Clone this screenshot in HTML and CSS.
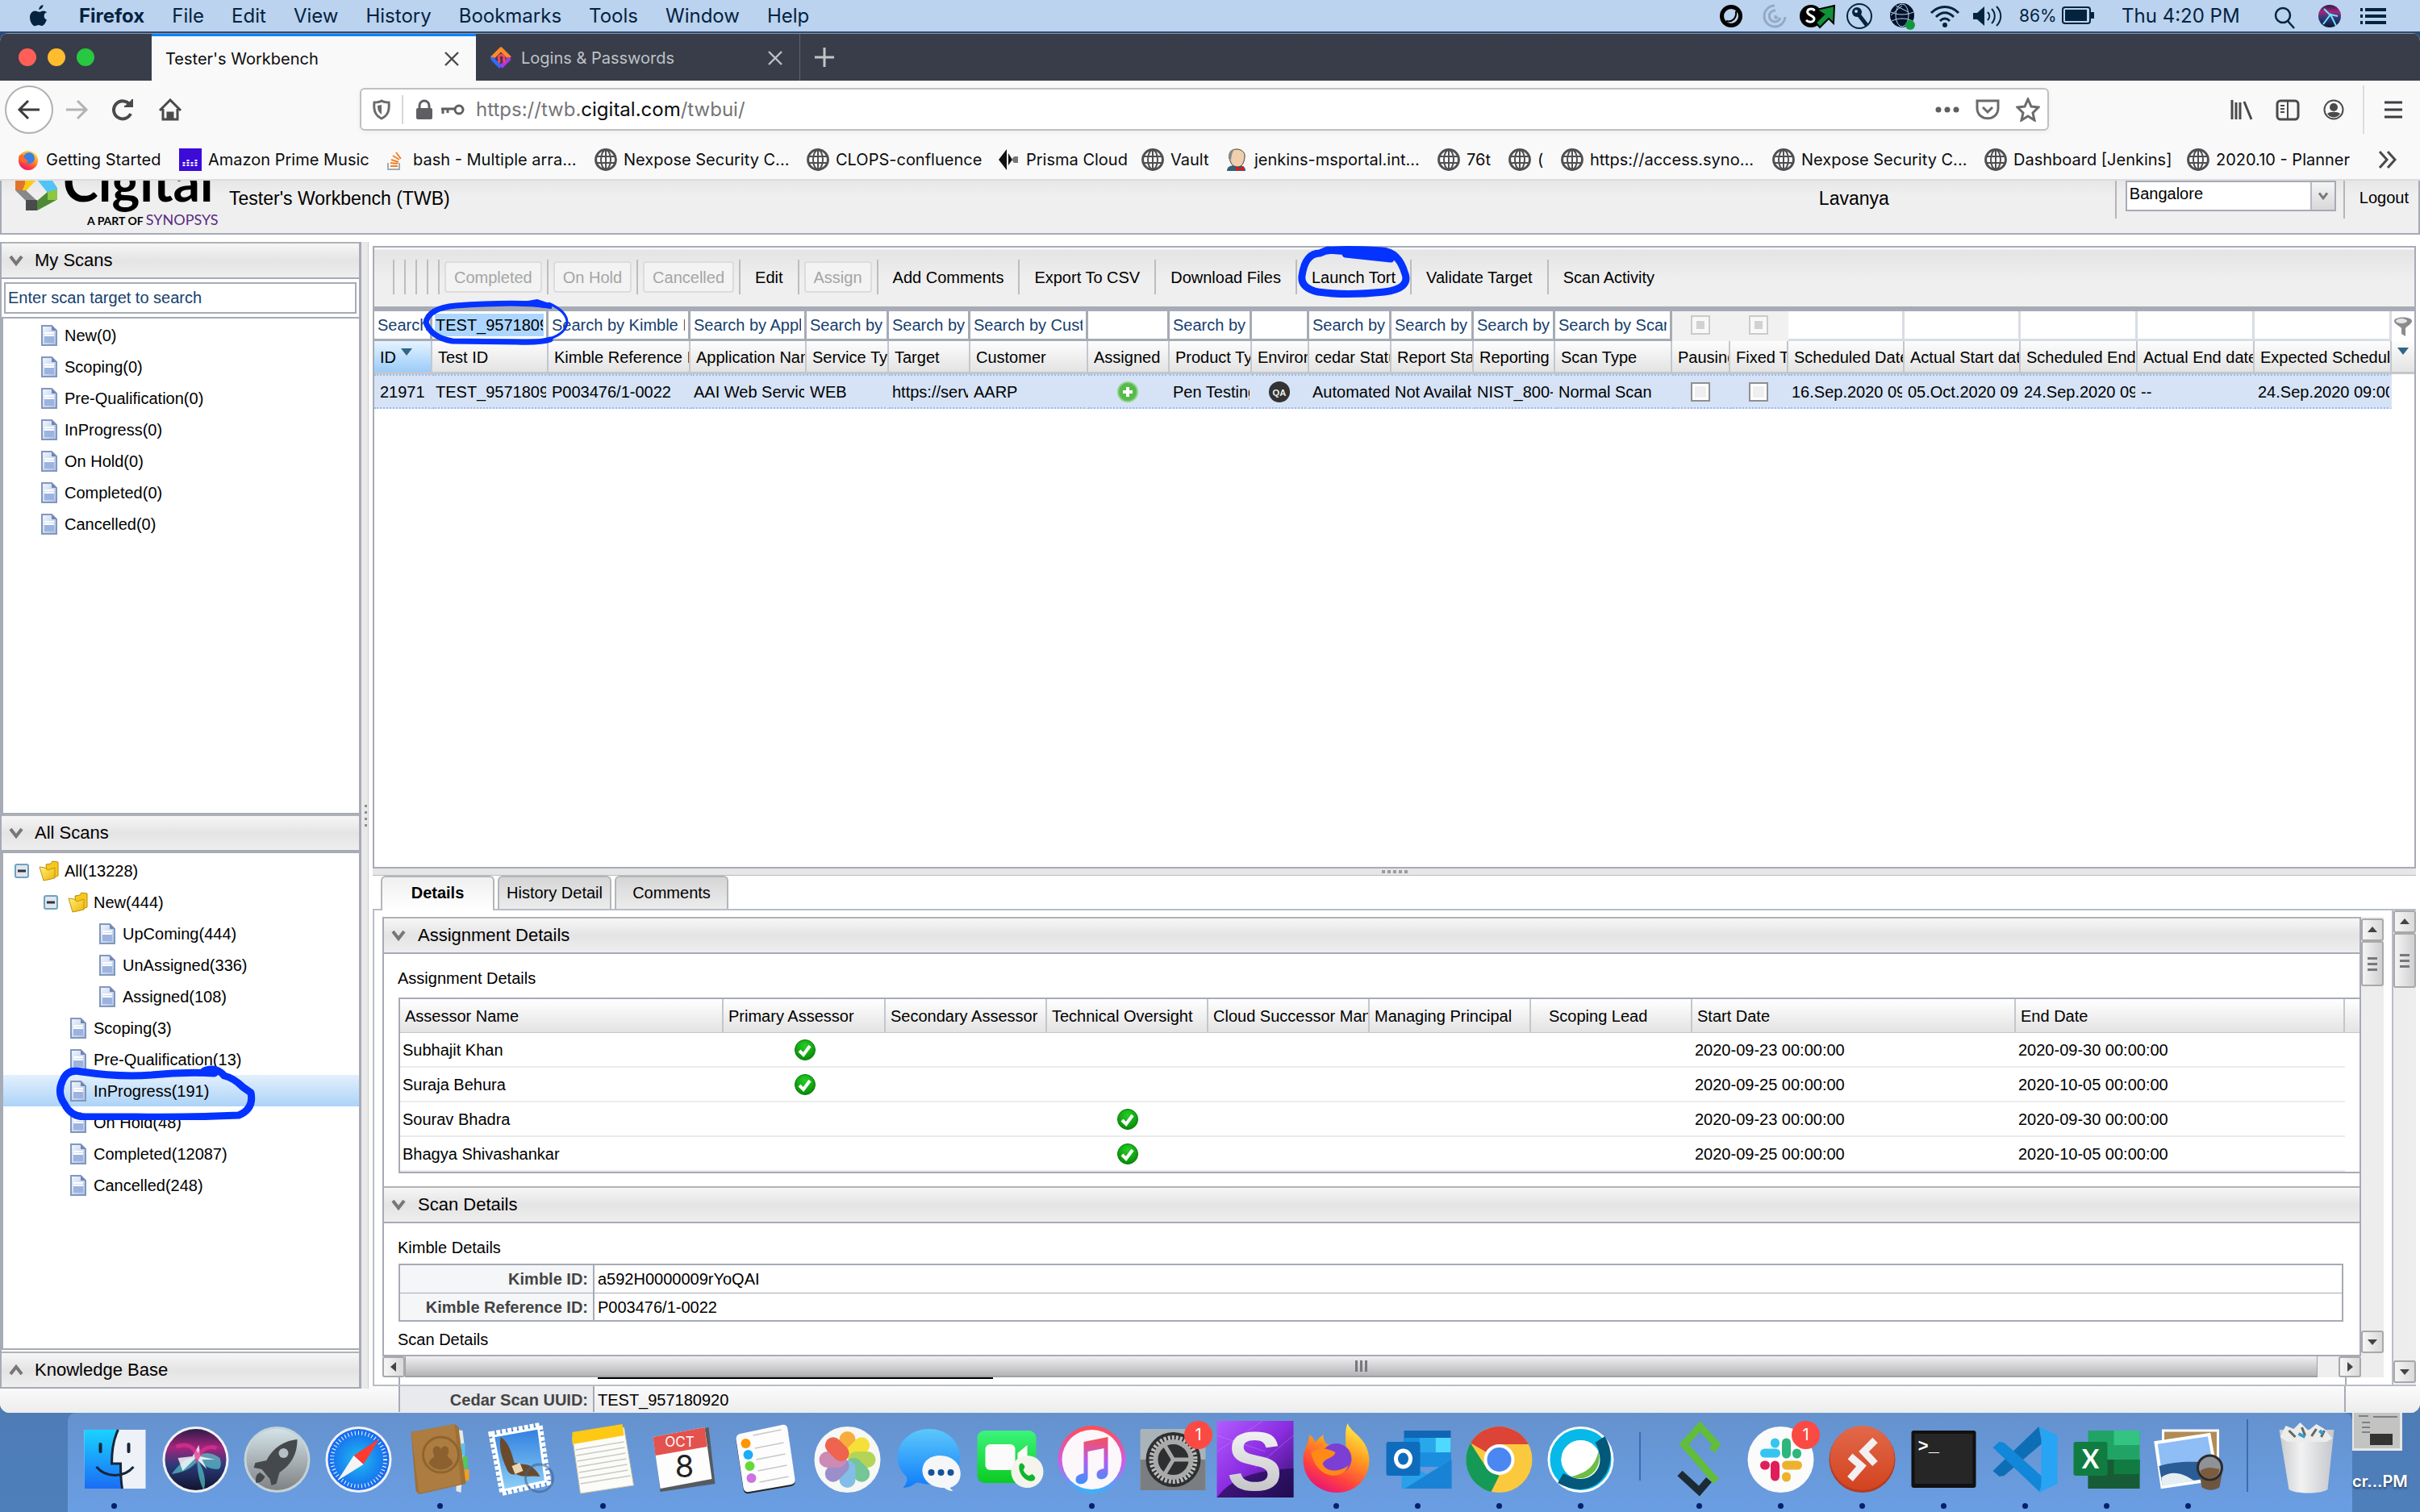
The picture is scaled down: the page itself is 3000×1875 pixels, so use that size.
FILE: index.html
```html
<!DOCTYPE html>
<html lang="en">
<head>
<meta charset="utf-8">
<title>Tester's Workbench</title>
<link rel="stylesheet" href="styles.css">
</head>
<body>
<svg class="defs" aria-hidden="true">
  <defs>
    <linearGradient id="docFill" x1="0" y1="0" x2="1" y2="1"><stop offset="0" stop-color="#f4f8fe"/><stop offset="1" stop-color="#a9bfe6"/></linearGradient>
    <linearGradient id="folderFill" x1="0" y1="0" x2="1" y2="1"><stop offset="0" stop-color="#fff07a"/><stop offset="1" stop-color="#eeb507"/></linearGradient>
    <radialGradient id="okFill" cx=".5" cy=".3" r=".7"><stop offset="0" stop-color="#26cf26"/><stop offset="1" stop-color="#078a07"/></radialGradient>
    <linearGradient id="foxFill" x1=".8" y1="0" x2=".3" y2="1"><stop offset="0" stop-color="#fff44f"/><stop offset=".4" stop-color="#ff9a1f"/><stop offset=".75" stop-color="#ff4040"/><stop offset="1" stop-color="#e6127a"/></linearGradient>
    <radialGradient id="siriFill" cx=".5" cy=".5" r=".55"><stop offset="0" stop-color="#bff6ff"/><stop offset=".25" stop-color="#3b9fc0"/><stop offset=".6" stop-color="#5a1e72"/><stop offset="1" stop-color="#170f33"/></radialGradient>
    <linearGradient id="orbFill" x1="0" y1="0" x2="0" y2="1"><stop offset="0" stop-color="#2c1c48"/><stop offset=".3" stop-color="#a3257c"/><stop offset=".6" stop-color="#2a3a78"/><stop offset="1" stop-color="#10142e"/></linearGradient>
    <linearGradient id="finderL" x1="0" y1="0" x2="0" y2="1"><stop offset="0" stop-color="#19d3ff"/><stop offset="1" stop-color="#1b6cf5"/></linearGradient>
    <linearGradient id="grayFill" x1="0" y1="0" x2="0" y2="1"><stop offset="0" stop-color="#d3e3e8"/><stop offset="1" stop-color="#7f8284"/></linearGradient>
    <radialGradient id="safariFill"><stop offset="0" stop-color="#1ebff0"/><stop offset="1" stop-color="#1667f0"/></radialGradient>
    <linearGradient id="msgFill" x1="0" y1="0" x2="0" y2="1"><stop offset="0" stop-color="#5cc8fb"/><stop offset="1" stop-color="#0f7dfb"/></linearGradient>
    <linearGradient id="ftFill" x1="0" y1="0" x2="0" y2="1"><stop offset="0" stop-color="#3cf47c"/><stop offset="1" stop-color="#0bcb22"/></linearGradient>
    <linearGradient id="ringFill" x1="0" y1="0" x2="0" y2="1"><stop offset="0" stop-color="#ff4e50"/><stop offset=".55" stop-color="#d25be8"/><stop offset="1" stop-color="#2fb8fb"/></linearGradient>
    <linearGradient id="noteFill" x1="0" y1="0" x2="0" y2="1"><stop offset="0" stop-color="#fa4f56"/><stop offset=".5" stop-color="#b55cf0"/><stop offset="1" stop-color="#3794fa"/></linearGradient>
    <linearGradient id="purpleFill" x1="0" y1="0" x2="1" y2="1"><stop offset="0" stop-color="#b25cff"/><stop offset=".5" stop-color="#8a2ce0"/><stop offset="1" stop-color="#2d0e62"/></linearGradient>
    <linearGradient id="silver" x1="0" y1="0" x2="0" y2="1"><stop offset="0" stop-color="#fff"/><stop offset="1" stop-color="#b9b9bd"/></linearGradient>
    <linearGradient id="rdpFill" x1="0" y1="0" x2="0" y2="1"><stop offset="0" stop-color="#e2694a"/><stop offset="1" stop-color="#d2431f"/></linearGradient>
    <linearGradient id="skyFill" x1="0" y1="0" x2="0" y2="1"><stop offset="0" stop-color="#2f7fe0"/><stop offset="1" stop-color="#8fd0f7"/></linearGradient>
    <linearGradient id="binFill" x1="0" y1="0" x2="1" y2="0"><stop offset="0" stop-color="#c9cbce"/><stop offset=".4" stop-color="#f2f2f2"/><stop offset="1" stop-color="#c4c7cc"/></linearGradient>
    <symbol id="globe" viewBox="0 0 28 28"><g fill="none" stroke="#4f4f52" stroke-width="2"><circle cx="14" cy="14" r="12.4" stroke-width="3"/><ellipse cx="14" cy="14" rx="6" ry="12"/><path d="M14 2v24M3 10h22M3 18h22"/></g></symbol>
    <symbol id="doc" viewBox="0 0 26 26"><path d="M4 1h12l6 6v18H4z" fill="url(#docFill)" stroke="#8397bd" stroke-width="2"/><path d="M16 1v6h6z" fill="#7186b0"/><path d="M7 10h12M7 13h12" stroke="#fff" stroke-width="2"/><path d="M7 14h12v8H7z" fill="#9db3df"/></symbol>
    <symbol id="folder" viewBox="0 0 26 26"><path d="M9 5l6-1 2-3 7 1v17l-13 5z" fill="#f6c81c" stroke="#b98906"/><path d="M1 8l7 1 3 3 9-3v13L6 25z" fill="url(#folderFill)" stroke="#c1920a"/></symbol>
    <symbol id="minus" viewBox="0 0 18 18"><rect x="1" y="1" width="16" height="16" rx="2" fill="#dfe6ef" stroke="#6fa3c0" stroke-width="2"/><path d="M4 9h10" stroke="#333" stroke-width="3"/></symbol>
    <symbol id="down" viewBox="0 0 18 14"><path d="M2 2l7 9 7-9" fill="none" stroke="#777" stroke-width="4"/></symbol>
    <symbol id="ok" viewBox="0 0 28 28"><circle cx="14" cy="14" r="12.5" fill="url(#okFill)" stroke="#067a06"/><path d="M7 15l5 5 8-11" fill="none" stroke="#fff" stroke-width="4"/></symbol>
    <symbol id="x" viewBox="0 0 18 18"><path d="M1 1l16 16M17 1L1 17" stroke="currentColor" stroke-width="2.4"/></symbol>
  </defs>
</svg>

<header class="menubar">
  <svg class="apple" viewBox="0 0 24 28"><path fill="#04233f" d="M16.5 0c.3 2.800-2.400 6-5.200 5.900C11 3.300 13.700.4 16.500 0zM20 9.500c-3.500 2.200-3 7.400.9 9.100-1 3-3.100 7-5.500 7.400-1.900.2-2.500-1.100-4.700-1.100S7.800 26.200 6 26.200C3 26 0 20.300 0 15.500 0 10.500 3.200 7.500 6.600 7.500c2 0 3.400 1.300 5 1.300 1.500 0 2.900-1.500 5.300-1.400 2 .1 3.700 1 4.700 2.400z"/></svg>
  <nav class="menus"><b>Firefox</b><span>File</span><span>Edit</span><span>View</span><span>History</span><span>Bookmarks</span><span>Tools</span><span>Window</span><span>Help</span></nav>
  <div class="status">
    <svg viewBox="0 0 53 36"><circle cx="26" cy="18" r="11.500" fill="none" stroke="#000" stroke-width="5"/><path d="M20 24c8 2 13-4 12-12" fill="none" stroke="#000" stroke-width="2"/></svg>
    <svg viewBox="0 0 53 36" fill="none" stroke="#93a9c6" stroke-width="3"><path d="M27 5a13 13 0 1 0 13 14"/><path d="M28 11a7 7 0 1 0 6 9"/><path d="M28 17v3h3"/></svg>
    <svg viewBox="0 0 53 36"><circle cx="19" cy="18" r="14" fill="#000"/><path d="M24 11c-5-4-11-1-9 3s9 4 8 8-7 4-10 1" fill="none" stroke="#fff" stroke-width="3"/><path d="M26 10l22-5-1 22-6-6-11 11-5-6 10-10z" fill="#109038" stroke="#000" stroke-width="2"/></svg>
    <svg viewBox="0 0 53 36"><circle cx="26" cy="18" r="15" fill="none" stroke="#04233f" stroke-width="2"/><circle cx="23" cy="13" r="6" fill="#04233f"/><path d="M25 16l10 13" stroke="#04233f" stroke-width="5"/><circle cx="22" cy="12" r="2" fill="#bbd3ef"/></svg>
    <svg viewBox="0 0 53 36"><circle cx="26" cy="17" r="15" fill="#04122b"/><g fill="none" stroke="#bbd3ef"><ellipse cx="26" cy="17" rx="8" ry="14"/><path d="M12 13c9 4 19 4 28 0M13 24c9-4 17-4 26 0M18 5l16 8M12 17l14-12"/></g><circle cx="36" cy="29" r="6" fill="#12983c"/></svg>
    <svg viewBox="0 0 53 36" fill="none" stroke="#04233f" stroke-width="3"><path d="M9 14c10-10 24-10 34 0M15 19c7-7 15-7 22 0M20 24c4-4 8-4 12 0"/><circle cx="26" cy="29" r="1.500" fill="#04233f"/></svg>
    <svg viewBox="0 0 53 36"><path d="M8 14h5l9-8v24l-9-8H8z" fill="#04233f"/><path d="M26 13c3 3 3 7 0 10M31 9c5 5 5 13 0 18M37 6c7 7 7 17 0 24" fill="none" stroke="#04233f" stroke-width="2"/></svg>
    <span class="pct">86%</span>
    <svg class="battery" viewBox="0 0 42 24"><rect x="1" y="1" width="34" height="20" rx="3" fill="none" stroke="#04233f" stroke-width="2"/><path d="M4 4h27v14H4z" fill="#04233f"/><path d="M38 7v8" stroke="#04233f" stroke-width="4"/></svg>
    <span class="clock">Thu 4:20 PM</span>
    <svg class="end" viewBox="0 0 56 36" fill="none" stroke="#04233f" stroke-width="2.500"><circle cx="26" cy="17" r="9"/><path d="M32 24l8 9"/></svg>
    <svg class="end" viewBox="0 0 56 36"><circle cx="28" cy="18" r="14" fill="url(#orbFill)"/><path d="M20 28l9-12 7 14M28 16l-7-7M29 16l9 2" stroke="#6fe6ff" stroke-width="2" fill="none"/></svg>
    <svg class="end" viewBox="0 0 56 36" stroke="#04233f" stroke-width="4"><path d="M16 10h26M16 18h26M16 26h26M10 10h3M10 18h3M10 26h3"/></svg>
  </div>
</header>

<div class="window">
  <div class="tabstrip">
    <div class="lights"><i class="red"></i><i class="amber"></i><i class="green"></i></div>
    <div class="btab active"><span>Tester's Workbench</span><button aria-label="Close tab"><svg viewBox="0 0 18 18"><use href="#x"/></svg></button></div>
    <div class="btab"><svg class="fav" viewBox="0 0 28 28"><path d="M3 14L14 3l11 11" fill="none" stroke="#ff8a2a" stroke-width="5" stroke-linejoin="round"/><path d="M3 13c0 2 4 6 11 12" fill="none" stroke="#2f6bff" stroke-width="5"/><path d="M25 14L14 25" fill="none" stroke="#a13be8" stroke-width="5"/><path d="M11 20c2-3 1-4 0-6 0-5 7-5 7 0-1 2-1 3 1 6" fill="none" stroke="#ff3f5e" stroke-width="3"/></svg><span>Logins &amp; Passwords</span><button aria-label="Close tab"><svg viewBox="0 0 18 18"><use href="#x"/></svg></button></div>
    <button class="newtab" aria-label="New tab"><svg viewBox="0 0 26 26"><path d="M13 1v24M1 13h24" stroke="#c3c4c8" stroke-width="3"/></svg></button>
  </div>
  <div class="navbar">
    <button class="back" aria-label="Back"><svg viewBox="0 0 30 26" fill="none" stroke="#3c3c3f" stroke-width="3"><path d="M28 13H3M14 2L3 13l11 11"/></svg></button>
    <button class="tool" aria-label="Forward"><svg viewBox="0 0 30 26" fill="none" stroke="#b3b3b5" stroke-width="3"><path d="M2 13h25M16 2l11 11-11 11"/></svg></button>
    <button class="tool" aria-label="Reload"><svg viewBox="0 0 30 28" fill="none" stroke="#4a4a4d" stroke-width="4"><path d="M24 19a11 11 0 1 1-1-11"/><path d="M16 10h10V1" fill="#4a4a4d" stroke-width="2"/></svg></button>
    <button class="tool" aria-label="Home"><svg viewBox="0 0 30 28" fill="none" stroke="#4a4a4d" stroke-width="3"><path d="M2 15L15 2l13 13M6 13v13h18V13"/><path d="M12 26v-8h6v8" fill="#4a4a4d"/></svg></button>
    <div class="urlbar">
      <svg class="u1" viewBox="0 0 26 26"><path d="M13 2c3 2 6 2 9 2 1 10-1 16-9 20C5 20 3 14 4 4c3 0 6 0 9-2z" fill="none" stroke="#6b6b6e" stroke-width="3"/><path d="M13 7v12c-4-3-5-6-5-11z" fill="#6b6b6e"/></svg>
      <i></i>
      <svg class="u2" viewBox="0 0 24 26"><path d="M6 12V8a6 6 0 0 1 12 0v4" fill="none" stroke="#5f5f62" stroke-width="3"/><rect x="2" y="11" width="20" height="14" rx="2" fill="#5f5f62"/></svg>
      <svg class="u3" viewBox="0 0 30 16"><circle cx="23" cy="8" r="5" fill="none" stroke="#5f5f62" stroke-width="3"/><path d="M18 7H1M3 7v6M9 7v5" fill="none" stroke="#5f5f62" stroke-width="3"/></svg>
      <span class="url">https://twb.<b>cigital.com</b>/twbui/</span>
      <svg class="u4" viewBox="0 0 30 8" fill="#5f5f62"><circle cx="4" cy="4" r="3.500"/><circle cx="15" cy="4" r="3.500"/><circle cx="26" cy="4" r="3.500"/></svg>
      <svg class="u4" viewBox="0 0 30 28" fill="none" stroke="#6b6b6e" stroke-width="3"><path d="M2 3h26v9c0 17-26 17-26 0z"/><path d="M9 11l6 6 6-6"/></svg>
      <svg class="u5" viewBox="0 0 30 30" fill="none" stroke="#6b6b6e" stroke-width="3"><path d="M15 2l4 9 9 1-7 7 2 9-8-5-8 5 2-9-7-7 9-1z"/></svg>
    </div>
    <div class="navend">
      <svg viewBox="0 0 30 28" stroke="#4a4a4d" stroke-width="3" fill="none"><path d="M3 2v24M8 5v21M13 5v21M18 4l9 22"/></svg>
      <svg viewBox="0 0 30 28" stroke="#4a4a4d" stroke-width="3" fill="none"><rect x="2" y="3" width="26" height="23" rx="4"/><path d="M15 3v23M6 9h5M6 13h5M6 17h5" stroke-width="2"/></svg>
      <svg viewBox="0 0 30 28"><circle cx="15" cy="14" r="11.500" fill="none" stroke="#4a4a4d" stroke-width="2"/><circle cx="15" cy="11" r="5" fill="#4a4a4d"/><path d="M7 19c3-3 13-3 16 0-4 6-12 6-16 0z" fill="#4a4a4d"/></svg>
      <i></i>
      <svg viewBox="0 0 30 28" stroke="#3c3c3f" stroke-width="3"><path d="M4 5h22M4 14h22M4 23h22"/></svg>
    </div>
  </div>
  <nav class="bookmarks">
    <a href="#"><svg viewBox="0 0 28 28"><circle cx="14" cy="15" r="12" fill="url(#foxFill)"/><circle cx="15" cy="12" r="7" fill="#3c7fe8"/><path d="M2 12C3 6 6 9 8 8c-1 4 4 5 6 8-5 4-10 0-12-4z" fill="#ff6a2a"/></svg>Getting Started</a>
    <a href="#"><svg viewBox="0 0 28 28"><path d="M0 0h28v28H0z" fill="#3d0bd8"/><path d="M6 22v-6M11 22v-9M16 22v-5M21 22v-9" stroke="#fff" stroke-width="3" stroke-dasharray="2 1"/></svg>Amazon Prime Music</a>
    <a href="#"><svg viewBox="0 0 28 28" fill="none"><path d="M5 18v8h14v-8" stroke="#a3abb3" stroke-width="2"/><path d="M8 22h9M8 18l9 1M9 14l9 3M11 9l8 5M15 5l6 8" stroke="#f48024" stroke-width="2"/></svg>bash - Multiple arra...</a>
    <a href="#"><svg><use href="#globe"/></svg>Nexpose Security C...</a>
    <a href="#"><svg><use href="#globe"/></svg>CLOPS-confluence</a>
    <a href="#"><svg viewBox="0 0 28 28"><path d="M12 1L2 14l10 13zM14 6l5 8-5 7z" fill="#111"/><path d="M18 14l3-4h5v8h-5z" fill="#777"/></svg>Prisma Cloud</a>
    <a href="#"><svg><use href="#globe"/></svg>Vault</a>
    <a href="#"><svg viewBox="0 0 28 28"><path d="M2 28c0-6 5-7 12-7s11 1 11 7z" fill="#335f78"/><path d="M5 11C5 3 9 1 14 1s11 3 10 10-3 12-9 12S6 18 5 11z" fill="#eecfae" stroke="#4a3a2c"/><path d="M4 13C3 5 7 1 12 1 8 4 8 9 7 14z" fill="#888"/><path d="M13 22l5 3 5-3v6l-5-2-5 2z" fill="#e11"/></svg>jenkins-msportal.int...</a>
    <a href="#"><svg><use href="#globe"/></svg>76t</a>
    <a href="#"><svg><use href="#globe"/></svg>(</a>
    <a href="#"><svg><use href="#globe"/></svg>https://access.syno...</a>
    <a href="#"><svg><use href="#globe"/></svg>Nexpose Security C...</a>
    <a href="#"><svg><use href="#globe"/></svg>Dashboard [Jenkins]</a>
    <a href="#"><svg><use href="#globe"/></svg>2020.10 - Planner</a>
    <button aria-label="More bookmarks"><svg viewBox="0 0 28 28" fill="none" stroke="#4a4a4d" stroke-width="3"><path d="M4 4l9 10-9 10M14 4l9 10-9 10"/></svg></button>
  </nav>

  <main class="page">
    <div class="banner">
      <div class="logo">
        <svg viewBox="0 0 52 37"><path d="M0 0h12v5L9 12H0z" fill="#e0742a"/><path d="M12 0h13L13 13l-4-1 3-7z" fill="#fdc911"/><path d="M28 0h18l6 9v3l-12 3z" fill="#4fc4f5"/><path d="M0 12h13l14 13H13z" fill="#86888a"/><path d="M13 24h14v13H13z" fill="#4a4b4d"/><path d="M27 25l13-11v9l11 1-22 12-2 1z" fill="#4f8a35"/><path d="M40 14l12-3v13H40z" fill="#8dc63f"/></svg>
        <div class="brand"><strong>Cigital</strong><small>A PART OF <em>SYNOPSYS</em></small></div>
      </div>
      <h1>Tester's Workbench (TWB)</h1>
      <span class="user">Lavanya</span>
      <label class="office"><select aria-label="Office"><option>Bangalore</option></select><span class="drop"><svg viewBox="0 0 18 14"><use href="#down"/></svg></span></label>
      <a class="logout" href="#">Logout</a>
    </div>

    <div class="work">
      <aside>
        <button class="bar"><svg><use href="#down"/></svg>My Scans</button>
        <div class="find"><input aria-label="Scan target" placeholder="Enter scan target to search"></div>
        <ul class="tree mine">
          <li><svg class="ic"><use href="#doc"/></svg>New(0)</li>
          <li><svg class="ic"><use href="#doc"/></svg>Scoping(0)</li>
          <li><svg class="ic"><use href="#doc"/></svg>Pre-Qualification(0)</li>
          <li><svg class="ic"><use href="#doc"/></svg>InProgress(0)</li>
          <li><svg class="ic"><use href="#doc"/></svg>On Hold(0)</li>
          <li><svg class="ic"><use href="#doc"/></svg>Completed(0)</li>
          <li><svg class="ic"><use href="#doc"/></svg>Cancelled(0)</li>
        </ul>
        <button class="bar"><svg><use href="#down"/></svg>All Scans</button>
        <ul class="tree all">
          <li class="open"><svg class="tg"><use href="#minus"/></svg><svg class="ic"><use href="#folder"/></svg>All(13228)</li>
          <li class="open l1"><svg class="tg"><use href="#minus"/></svg><svg class="ic"><use href="#folder"/></svg>New(444)</li>
          <li class="l2"><svg class="ic"><use href="#doc"/></svg>UpComing(444)</li>
          <li class="l2"><svg class="ic"><use href="#doc"/></svg>UnAssigned(336)</li>
          <li class="l2"><svg class="ic"><use href="#doc"/></svg>Assigned(108)</li>
          <li class="l1"><svg class="ic"><use href="#doc"/></svg>Scoping(3)</li>
          <li class="l1"><svg class="ic"><use href="#doc"/></svg>Pre-Qualification(13)</li>
          <li class="l1 sel"><svg class="ic"><use href="#doc"/></svg>InProgress(191)
            <svg class="pen pen-tree" viewBox="0 0 250 70"><path d="M185 9Q200 3 210 15Q222 18 233 29L243 36Q247 56 228 64Q160 67 100 66H38Q20 66 12 50Q2 36 10 20Q16 6 33 10Q80 17 120 14Q160 10 198 12" fill="none" stroke="#0433ff" stroke-width="9" stroke-linecap="round" stroke-linejoin="round"/></svg></li>
          <li class="l1"><svg class="ic"><use href="#doc"/></svg>On Hold(48)</li>
          <li class="l1"><svg class="ic"><use href="#doc"/></svg>Completed(12087)</li>
          <li class="l1"><svg class="ic"><use href="#doc"/></svg>Cancelled(248)</li>
        </ul>
        <button class="bar up"><svg><use href="#down"/></svg>Knowledge Base</button>
      </aside>
      <div class="vsplit"><i></i><i></i><i></i><i></i></div>

      <section class="main">
        <div class="gridpanel">
          <div class="toolbar">
            <i></i><i></i><i></i><i></i><i></i>
            <button disabled>Completed</button><i></i><button disabled>On Hold</button><i></i><button disabled>Cancelled</button><i></i><button>Edit</button><i></i><button disabled>Assign</button><i></i><button>Add Comments</button><i></i><button>Export To CSV</button><i></i><button>Download Files</button><i></i><button class="marked">Launch Tort<svg class="pen pen-tort" viewBox="0 0 142 68"><path d="M38 9Q50 6 105 9Q126 10 134 38Q140 56 108 60Q60 65 26 60Q4 55 6 40Q10 12 28 12L38 8L118 14L116 19L60 13" fill="none" stroke="#0433ff" stroke-width="9" stroke-linecap="round" stroke-linejoin="round"/></svg></button><i></i><button>Validate Target</button><i></i><button>Scan Activity</button>
          </div>
          <div class="tablewrap">
          <table class="scans">
            <colgroup><col style="width:72px"><col style="width:144px"><col style="width:176px"><col style="width:144px"><col style="width:102px"><col style="width:101px"><col style="width:146px"><col style="width:101px"><col style="width:102px"><col style="width:71px"><col style="width:102px"><col style="width:102px"><col style="width:101px"><col style="width:145px"><col style="width:72px"><col style="width:72px"><col style="width:144px"><col style="width:144px"><col style="width:145px"><col style="width:145px"><col style="width:170px"><col style="width:28px"></colgroup>
            <thead>
              <tr class="filters">
                <td><input aria-label="Filter ID" placeholder="Search by ID"></td>
                <td class="focus"><input aria-label="Filter Test ID" value="TEST_957180920"></td>
                <td><input aria-label="Filter Kimble Reference ID" placeholder="Search by Kimble ID"></td>
                <td><input aria-label="Filter Application Name" placeholder="Search by Application"></td>
                <td><input aria-label="Filter Service Type" placeholder="Search by Service"></td>
                <td><input aria-label="Filter Target" placeholder="Search by Target"></td>
                <td><input aria-label="Filter Customer" placeholder="Search by Customer"></td>
                <td><input aria-label="Filter Assigned"></td>
                <td><input aria-label="Filter Product Type" placeholder="Search by Product"></td>
                <td><input aria-label="Filter Environment"></td>
                <td><input aria-label="Filter cedar Status" placeholder="Search by cedar"></td>
                <td><input aria-label="Filter Report Status" placeholder="Search by Report"></td>
                <td><input aria-label="Filter Reporting" placeholder="Search by Reporting"></td>
                <td><input aria-label="Filter Scan Type" placeholder="Search by Scan Type"></td>
                <td class="off"><input type="checkbox" aria-label="Filter Pausing" disabled></td>
                <td class="off"><input type="checkbox" aria-label="Filter Fixed Time" disabled></td>
                <td class="date"></td><td class="date"></td><td class="date"></td><td class="date"></td><td class="date"></td>
                <td class="funnel"><svg viewBox="0 0 24 26"><path d="M1 6c0-6 22-6 22 0 0 4-7 7-8 9v10l-5-3v-7C9 13 1 10 1 6z" fill="#8b8b8b"/><ellipse cx="10" cy="6" rx="7" ry="3" fill="#e4e4e4"/></svg></td>
              </tr>
              <tr class="heads">
                <th class="sorted">ID <svg viewBox="0 0 14 9"><path d="M0 0h14L7 9z" fill="#2f6687"/></svg></th><th>Test ID</th><th>Kimble Reference ID</th><th>Application Name</th><th>Service Type</th><th>Target</th><th>Customer</th><th>Assigned</th><th>Product Type</th><th>Environment</th><th>cedar Status</th><th>Report Status</th><th>Reporting</th><th>Scan Type</th><th>Pausing</th><th>Fixed Time</th><th>Scheduled Date</th><th>Actual Start date</th><th>Scheduled End</th><th>Actual End date</th><th>Expected Schedule</th><th class="sortcell"><svg viewBox="0 0 14 9"><path d="M0 0h14L7 9z" fill="#2f6687"/></svg></th>
              </tr>
            </thead>
            <tbody>
              <tr>
                <td>21971</td><td>TEST_957180920</td><td>P003476/1-0022</td><td>AAI Web Services</td><td>WEB</td><td>https://services</td><td>AARP</td>
                <td class="mid"><svg viewBox="0 0 28 28"><circle cx="14" cy="14" r="12" fill="#58b94c" stroke="#8fd486" stroke-width="2"/><path d="M14 8v12M8 14h12" stroke="#fff" stroke-width="4"/></svg></td>
                <td>Pen Testing</td>
                <td class="mid"><svg viewBox="0 0 30 30"><circle cx="15" cy="15" r="14" fill="#333"/><text x="15" y="20" text-anchor="middle" class="qa">QA</text></svg></td>
                <td>Automated</td><td>Not Available</td><td>NIST_800-53</td><td>Normal Scan</td>
                <td class="mid"><input type="checkbox" aria-label="Pausing"></td><td class="mid"><input type="checkbox" aria-label="Fixed Time"></td>
                <td>16.Sep.2020 09:00</td><td>05.Oct.2020 09:00</td><td>24.Sep.2020 09:00</td><td>--</td><td>24.Sep.2020 09:00</td><td class="blank"></td>
              </tr>
            </tbody>
          </table>
          <svg class="pen pen-filter" viewBox="0 0 186 60"><path d="M159 6Q182 16 182 30Q180 44 160 50" fill="none" stroke="#0433ff" stroke-width="3"/><path d="M161 51Q150 55 120 54L40 53Q14 49 7 30Q10 12 44 9Q100 5 142 7L160 9" fill="none" stroke="#0433ff" stroke-width="7" stroke-linejoin="round" stroke-linecap="round"/><path d="M110 7L145 1L163 7V13L140 10z" fill="#0433ff"/></svg>
          </div>
        </div>
        <div class="hsplit"><i></i><i></i><i></i><i></i><i></i></div>
        <div class="tabs"><button class="on">Details</button><button>History Detail</button><button>Comments</button></div>
        <div class="frame">
          <div class="inner">
            <div class="pane">
              <div class="content">
                <button class="bar"><svg><use href="#down"/></svg>Assignment Details</button>
                <h2>Assignment Details</h2>
                <table class="people">
                  <colgroup><col style="width:401px"><col style="width:201px"><col style="width:200px"><col style="width:200px"><col style="width:200px"><col style="width:200px"><col style="width:200px"><col style="width:401px"><col style="width:408px"><col style="width:21px"></colgroup>
                  <thead><tr><th>Assessor Name</th><th>Primary Assessor</th><th>Secondary Assessor</th><th>Technical Oversight</th><th>Cloud Successor Manager</th><th>Managing Principal</th><th class="lead">Scoping Lead</th><th>Start Date</th><th>End Date</th><th></th></tr></thead>
                  <tbody>
                    <tr><td>Subhajit Khan</td><td class="mid"><svg><use href="#ok"/></svg></td><td></td><td></td><td></td><td></td><td></td><td>2020-09-23 00:00:00</td><td>2020-09-30 00:00:00</td><td class="blank"></td></tr>
                    <tr><td>Suraja Behura</td><td class="mid"><svg><use href="#ok"/></svg></td><td></td><td></td><td></td><td></td><td></td><td>2020-09-25 00:00:00</td><td>2020-10-05 00:00:00</td><td class="blank"></td></tr>
                    <tr><td>Sourav Bhadra</td><td></td><td></td><td class="mid"><svg><use href="#ok"/></svg></td><td></td><td></td><td></td><td>2020-09-23 00:00:00</td><td>2020-09-30 00:00:00</td><td class="blank"></td></tr>
                    <tr><td>Bhagya Shivashankar</td><td></td><td></td><td class="mid"><svg><use href="#ok"/></svg></td><td></td><td></td><td></td><td>2020-09-25 00:00:00</td><td>2020-10-05 00:00:00</td><td class="blank"></td></tr>
                  </tbody>
                </table>
                <button class="bar"><svg><use href="#down"/></svg>Scan Details</button>
                <h2>Kimble Details</h2>
                <table class="facts"><tbody><tr><th>Kimble ID:</th><td>a592H0000009rYoQAI</td></tr><tr><th>Kimble Reference ID:</th><td>P003476/1-0022</td></tr></tbody></table>
                <h2 class="tight">Scan Details</h2>
              </div>
              <div class="hscroll"><button aria-label="Scroll left"><svg viewBox="0 0 10 12"><path d="M8 0v12L1 6z" fill="#444"/></svg></button><div class="thumb"><i></i><i></i><i></i></div><button aria-label="Scroll right"><svg viewBox="0 0 10 12"><path d="M2 0v12l7-6z" fill="#444"/></svg></button></div>
            </div>
            <div class="vscroll"><button aria-label="Scroll up"><svg viewBox="0 0 12 10"><path d="M0 8h12L6 1z" fill="#444"/></svg></button><div class="thumb"><i></i><i></i><i></i></div><button aria-label="Scroll down"><svg viewBox="0 0 12 10"><path d="M0 2h12L6 9z" fill="#444"/></svg></button></div>
            <div class="under"><span></span></div>
          </div>
          <div class="vscroll outer"><button aria-label="Scroll up"><svg viewBox="0 0 12 10"><path d="M0 8h12L6 1z" fill="#444"/></svg></button><div class="thumb"><i></i><i></i><i></i></div><button aria-label="Scroll down"><svg viewBox="0 0 12 10"><path d="M0 2h12L6 9z" fill="#444"/></svg></button></div>
        </div>
        <dl class="cedar"><dt>Cedar Scan UUID:</dt><dd>TEST_957180920</dd></dl>
      </section>
    </div>
  </main>
</div>

<footer class="desk">
  <div class="dock">
    <div class="app run"><svg viewBox="0 0 100 100"><path d="M13 13h76v73H13z" fill="#eef2f8"/><path d="M13 13h42c-6 14-7 28-7 42h10c0 12 0 20 2 31H13z" fill="url(#finderL)"/><path d="M33 31v9M68 31v9" stroke="#16263a" stroke-width="4" stroke-linecap="round"/><path d="M28 59c12 14 34 14 46 0M55 13c-7 14-8 28-8 42h11c0 12 0 20 2 31" fill="none" stroke="#16263a" stroke-width="3"/></svg></div>
    <div class="app"><svg viewBox="0 0 100 100"><circle cx="50" cy="50" r="41" fill="#f2f2f4"/><circle cx="50" cy="50" r="38" fill="url(#orbFill)"/><path d="M20 68c10-12 18-22 30-20 8-8 20-8 30 0 2 6 2 12-2 14-10 0-18-4-24-10 6 12 10 24 6 36-6-12-8-26-8-36-6 8-16 14-32 16z" fill="#5fe0d8" opacity=".6"/><path d="M34 64l16-16 14 14-6-12h16l-18-4-2-14-8 14-18 2z" fill="#fff" opacity=".8"/><path d="M26 34c16-6 24 2 26 14 6-12 16-16 24-12" fill="none" stroke="#e2308f" stroke-width="5" opacity=".7"/></svg></div>
    <div class="app"><svg viewBox="0 0 100 100"><circle cx="50" cy="50" r="41" fill="#c5d2d6"/><circle cx="50" cy="50" r="38" fill="url(#grayFill)"/><path d="M75 25c-20 2-32 14-38 26l-14 3-2 6 10 2 10 12 2 8 6-2 4-14c12-8 22-20 22-41zM29 66c-6 2-6 8-5 13 5 0 9-3 11-8z" fill="#45494c"/><circle cx="58" cy="42" r="6" fill="#b4c0c4"/></svg></div>
    <div class="app"><svg viewBox="0 0 100 100"><circle cx="50" cy="50" r="41" fill="#f2f2f4"/><circle cx="50" cy="50" r="38" fill="url(#safariFill)"/><circle cx="50" cy="50" r="33" fill="none" stroke="#fff" stroke-width="5" stroke-dasharray="1 3.300"/><path d="M76 24L56 56 44 45z" fill="#ff3b30"/><path d="M24 76l20-31 12 11z" fill="#f4f4f4"/></svg></div>
    <div class="app run"><svg viewBox="0 0 100 100"><path d="M70 13l8 1 2 17-4 60-6-2z" fill="#e8e8e8"/><path d="M76 30h5v15h-5z" fill="#5cc4ea"/><path d="M78 46h6v15h-6z" fill="#52c958"/><path d="M80 62h6v14h-6z" fill="#f0a020"/><path d="M14 16l54-10 5 4 9 70-58 13-4-4z" fill="#9f6f34"/><path d="M14 16l54-10 8 74-52 12z" fill="#ad7c40"/><circle cx="51" cy="44" r="22" fill="none" stroke="#8f6430" stroke-width="3"/><path d="M36 55c2-8 6-6 7-10-6-10 4-16 8-8 4-8 14-2 8 8 1 4 5 2 7 10-8 10-22 10-30 0z" fill="#8d6030"/></svg></div>
    <div class="app"><svg viewBox="0 0 100 100"><path d="M12 18l61-11 11 72-58 13z" fill="#2f7fe0" stroke="#fff" stroke-width="6" stroke-dasharray="5 2"/><path d="M15 21l56-10 9 66-52 11z" fill="url(#skyFill)" stroke="#fff" stroke-width="3"/><path d="M24 22c10 6 14 20 17 32l12 2c10 0 16 8 20 15-12-2-20 2-30-3-6 2-10-2-12-8-6-14-9-24-7-38z" fill="#6b4a2b"/><path d="M38 58l10-4 4 10-10 4z" fill="#e9d6b4"/><circle cx="72" cy="73" r="17" fill="none" stroke="#3f6288" stroke-width="3" opacity=".6"/></svg></div>
    <div class="app run"><svg viewBox="0 0 100 100"><path d="M12 22l64-12 12 72-66 10z" fill="#fbfbf8" stroke="#c9c2a0"/><path d="M12 16l62-10 2 14-64 11z" fill="#fdc914"/><g stroke="#c9c9c9" stroke-width="1.500"><path d="M16 38l60-10M17 45l60-10M18 52l60-10M19 59l60-10M20 66l60-10M21 73l60-10M22 80l62-10"/></g></svg></div>
    <div class="app"><svg viewBox="0 0 100 100"><path d="M12 22l68-12 8 70-68 10z" fill="#565a60"/><path d="M11 22l64-12 9 64-64 12z" fill="#fdfdfd"/><path d="M11 22l64-12 3 24-64 11z" fill="#e4524d"/><text x="44" y="34" text-anchor="middle" class="oct">OCT</text><text x="50" y="72" text-anchor="middle" class="day">8</text></svg></div>
    <div class="app"><svg viewBox="0 0 100 100"><path d="M18 20l52-11q6-1 7 5l9 62q1 6-5 7l-52 9q-6 1-7-5l-9-60q0-6 5-7z" fill="#222"/><path d="M18 18l52-11q6-1 7 5l9 62q1 6-5 7l-52 9q-6 1-7-5l-9-60q0-6 5-7z" fill="#fdfdfd"/><circle cx="25" cy="30" r="6" fill="#ff9500"/><circle cx="28" cy="44" r="6" fill="#1badf8"/><circle cx="30" cy="58" r="6" fill="#63da38"/><circle cx="32" cy="73" r="6" fill="#cc73e1"/><path d="M34 20l35-7M36 36l36-7M38 50l36-7M40 64l36-7M42 78l36-7" stroke="#c8c8c8" stroke-width="1.500"/></svg></div>
    <div class="app"><svg viewBox="0 0 100 100"><circle cx="50" cy="50" r="41" fill="#f7f7f5"/><g opacity=".85"><rect x="40" y="15" width="20" height="34" rx="10" fill="#f9a01b"/><rect x="40" y="15" width="20" height="34" rx="10" fill="#f5dc1a" transform="rotate(45 50 50)"/><rect x="40" y="15" width="20" height="34" rx="10" fill="#a9cf3b" transform="rotate(90 50 50)"/><rect x="40" y="15" width="20" height="34" rx="10" fill="#5fbd86" transform="rotate(135 50 50)"/><rect x="40" y="15" width="20" height="34" rx="10" fill="#6fb5e6" transform="rotate(180 50 50)"/><rect x="40" y="15" width="20" height="34" rx="10" fill="#8a7cc4" transform="rotate(225 50 50)"/><rect x="40" y="15" width="20" height="34" rx="10" fill="#c678ab" transform="rotate(270 50 50)"/><rect x="40" y="15" width="20" height="34" rx="10" fill="#ee4b32" transform="rotate(315 50 50)"/></g></svg></div>
    <div class="app"><svg viewBox="0 0 100 100"><path d="M50 12c46 0 54 62 6 68-12 2-16-2-22-1-4 3-10 6-16 6 5-6 6-10 4-14C-2 48 16 12 50 12z" fill="url(#msgFill)"/><path d="M64 45c28 0 34 34 12 40 2 2 3 4 5 4-6 0-9-2-12-4-34 0-36-40-5-40z" fill="#f5f6f8"/><g fill="#14529a"><circle cx="53" cy="66" r="4"/><circle cx="65" cy="66" r="4"/><circle cx="77" cy="66" r="4"/></g></svg></div>
    <div class="app"><svg viewBox="0 0 100 100"><rect x="9" y="14" width="73" height="65" rx="9" fill="url(#ftFill)"/><rect x="19" y="31" width="37" height="32" rx="6" fill="#fbfbfb"/><path d="M59 42l12-10v26H59z" fill="#fbfbfb"/><circle cx="71" cy="65" r="20" fill="#f4f4ec"/><path d="M61 57c2-4 5-3 7 2l-2 4c2 4 4 6 7 7l4-2c4 3 5 5 2 8-8 4-20-8-18-19z" fill="#10b52c"/></svg></div>
    <div class="app run"><svg viewBox="0 0 100 100"><circle cx="50" cy="50" r="42" fill="url(#ringFill)"/><circle cx="50" cy="50" r="37" fill="#fbf7fb"/><path d="M40 28l30-6v44c0 10-14 11-14 3 0-6 5-7 9-8V36l-20 4v32c0 10-15 11-15 3 0-6 6-7 10-8z" fill="url(#noteFill)"/></svg></div>
    <div class="app"><svg viewBox="0 0 100 100"><rect x="9" y="12" width="81" height="76" rx="2" fill="#a9b3b8"/><path d="M9 50h81v38H9z" fill="#7b7e80"/><circle cx="50" cy="50" r="34" fill="#2e2f31"/><circle cx="50" cy="50" r="27" fill="none" stroke="#bdbdbd" stroke-width="6" stroke-dasharray="3 2"/><circle cx="50" cy="50" r="22" fill="none" stroke="#a9a9a9" stroke-width="6"/><path d="M50 50h24M50 50L38 30M50 50L38 70" stroke="#a9a9a9" stroke-width="5"/></svg><span class="badge">1</span></div>
    <div class="app"><svg viewBox="0 0 100 100"><path d="M3 2h95v95H3z" fill="url(#purpleFill)"/><path d="M3 97c20-26 50-34 95-36v36z" fill="#1d0b4b" opacity=".7"/><path d="M3 40L60 2M50 60l48-40M3 20l60 20" stroke="#d78cff" opacity=".4"/><text x="50" y="88" text-anchor="middle" class="ess">S</text></svg></div>
    <div class="app run"><svg viewBox="0 0 100 100"><path d="M64 5c6 14 26 18 27 46C90 76 72 91 51 91 28 91 9 74 9 50c0-12 6-18 8-31 4 3 6 6 7 10 3-5 8-8 10-10 0 10 4 12 10 14 6-3 14 0 18 4 0-12-2-22 2-32z" fill="url(#foxFill)"/><circle cx="50" cy="49" r="19" fill="#7c3fd6"/><path d="M19 41c12-6 18-6 30 0-2 8-12 6-16 14 4 12 24 10 32 2-6 20-40 18-46-16z" fill="#ff8a16"/></svg></div>
    <div class="app run"><svg viewBox="0 0 100 100"><path d="M33 14h58v40H33z" fill="#1066b5"/><path d="M33 23h19v18H33z" fill="#1490df"/><path d="M52 23h20v18H52z" fill="#28a8ea"/><path d="M72 23h19v18H72z" fill="#50d9ff"/><path d="M52 41h39v18H52z" fill="#1b8fdf"/><path d="M30 50l31 18 31-18v36H30z" fill="#28a0ea"/><path d="M92 50v36H34z" fill="#1a82d4"/><rect x="11" y="28" width="42" height="42" rx="3" fill="#0f6cbd"/><ellipse cx="32" cy="49" rx="9" ry="10" fill="none" stroke="#fff" stroke-width="5"/></svg></div>
    <div class="app run"><svg viewBox="0 0 100 100"><circle cx="50" cy="50" r="41" fill="#fbc93d"/><path d="M50 50L14.500 29.500A41 41 0 0 1 85.500 29.500L86 31H50z" fill="#db4437"/><path d="M14.500 29.500L34 60l16 10-10 20A41 41 0 0 1 14.500 29.500z" fill="#159957"/><circle cx="50" cy="50" r="19" fill="#fff"/><circle cx="50" cy="50" r="15" fill="#4a87f2"/></svg></div>
    <div class="app run"><svg viewBox="0 0 100 100"><circle cx="50" cy="50" r="41" fill="#fff"/><circle cx="50" cy="50" r="31" fill="none" stroke="#07b9e8" stroke-width="14"/><path d="M74 25c18 28-6 72-49 48" fill="none" stroke="#04587a" stroke-width="14"/><circle cx="50" cy="50" r="24" fill="#fff"/><path d="M72 40c6 22-14 40-34 31 20-4 30-14 34-31z" fill="#6cbe45"/></svg></div>
    <div class="gap short"></div>
    <div class="app run"><svg viewBox="0 0 100 100" fill="none" stroke-width="9"><path d="M66 39l5-8-20-22-20 22 40 46" stroke="#62bd3b"/><path d="M26 67l24 22 12-14" stroke="#1c2a33"/></svg></div>
    <div class="app run"><svg viewBox="0 0 100 100"><circle cx="50" cy="50" r="41" fill="#fbfbfb"/><g stroke-width="11" stroke-linecap="round"><path d="M30 42h14M43 29v1" stroke="#36c5f0"/><path d="M57 29v14M70 42v1" stroke="#2eb67d"/><path d="M57 57h14M57 71v1" stroke="#ecb22e"/><path d="M43 57v14M30 57h1" stroke="#e01e5a"/></g></svg><span class="badge">1</span></div>
    <div class="app run"><svg viewBox="0 0 100 100"><circle cx="50" cy="50" r="41" fill="#b53b1d"/><circle cx="50" cy="48" r="40" fill="url(#rdpFill)"/><path d="M35 46l14 12-14 16M66 26L52 40l14 15" fill="none" stroke="#f4f0f2" stroke-width="9"/></svg></div>
    <div class="app run"><svg viewBox="0 0 100 100"><rect x="10" y="14" width="80" height="71" rx="3" fill="#111"/><path d="M14 18h72v62H14z" fill="#262626"/><text x="18" y="40" class="term">&gt;_</text></svg></div>
    <div class="app run"><svg viewBox="0 0 100 100"><path d="M67 9L10 64l8 7 6-1L71 30z" fill="#0e6eb5"/><path d="M10 35l8-7 6 1 47 42-2 20z" fill="#1087d8"/><path d="M67 9l23 11v60L67 91l3-8V20z" fill="#27a4f4"/></svg></div>
    <div class="app run"><svg viewBox="0 0 100 100"><path d="M27 14h64v72H27z" fill="#21a366"/><path d="M59 14h32v18H59z" fill="#33c481"/><path d="M27 50h64v36H27z" fill="#185c37"/><path d="M59 50h32v18H59z" fill="#107c41"/><rect x="9" y="28" width="42" height="42" rx="3" fill="#107c41"/><text x="30" y="61" text-anchor="middle" class="ex">X</text></svg></div>
    <div class="app run"><svg viewBox="0 0 100 100"><path d="M19 14h68v50H19z" fill="#b08d57" stroke="#fff" stroke-width="3"/><path d="M10 29l66-10 10 55-68 10z" fill="#8fbdf5" stroke="#fff" stroke-width="4"/><path d="M14 58c20-6 40-6 66-4l4 18-66 9z" fill="#2a5c96"/><path d="M17 72c14-10 28-4 40 4l-39 7z" fill="#e5eef3"/><path d="M63 62h30l-4 22c-6 5-16 5-22 0z" fill="#6d5540"/><circle cx="77" cy="60" r="15" fill="#8f9296" stroke="#2b2b2b" stroke-width="3"/><path d="M65 64c8-6 16-4 24-2-2 14-20 16-24 2z" fill="#7b5c3e"/></svg></div>
    <div class="gap"></div>
    <div class="app"><svg viewBox="0 0 100 100"><path d="M16 13l68 0-8 74c-8 6-40 6-48 0z" fill="url(#binFill)"/><path d="M17 22l7-14 10 4 8-8 10 10 10-8 10 6 10 12-8 4H26z" fill="#ececea"/><path d="M28 14l8 8M44 10l4 10M62 12l-6 9M72 14l-4 8" stroke="#666" stroke-width="3"/><path d="M40 18l8 4M66 14l4 4" stroke="#2f9fd0" stroke-width="4"/></svg></div>
  </div>
  <div class="file"><svg viewBox="0 0 62 47"><path d="M0 0h62v47H0z" fill="#e6e6e4"/><path d="M2 0h57v44H2z" fill="#c3c3c1"/><path d="M22 26h28v14H22z" fill="#333"/><path d="M8 4h12M26 5h30M12 12h10M12 18h10M12 24h10" stroke="#7c8087" stroke-width="2"/></svg><span>cr...PM</span></div>
</footer>
</body>
</html>
```

FILE: styles.css
```css
* { box-sizing: border-box; }
body {
  margin: 0;
  min-height: 100vh;
  background: linear-gradient(#2b4a76, #4f7fbb);
  color: #000;
  font: 20px/24px "Liberation Sans", Arial, sans-serif;
  overflow-x: hidden;
}
button, input, select { font: inherit; color: inherit; }
button { border: 0; padding: 0; background: none; }
svg { display: block; flex: none; }
ul, dl, dd, h1, h2 { margin: 0; padding: 0; }
.defs { position: absolute; width: 0; height: 0; }

/* System menu bar */
.menubar {
  display: flex;
  align-items: center;
  height: 39px;
  padding-left: 37px;
  background: #bbd3ef;
  color: #04233f;
  font: 24px/38px Inter, sans-serif;
}
.apple { width: 24px; height: 28px; margin-right: 37px; }
.menus { display: flex; gap: 34px; }
.status { display: flex; align-items: center; margin-left: auto; padding-right: 28px; }
.status svg { width: 53px; height: 36px; }
.status .pct { font-size: 21px; margin-left: 12px; width: 53px; }
.status .battery { width: 42px; height: 24px; }
.status .clock { margin: 0 24px 0 32px; width: 150px; white-space: nowrap; }
.status .end { width: 56px; }

/* Browser chrome */
.window {
  margin-top: 2px;
  background: #fff;
  border-radius: 10px 10px 12px 12px;
  overflow: hidden;
}
.tabstrip, .navbar, .bookmarks { font-family: Inter, sans-serif; }
.tabstrip { display: flex; height: 59px; background: #383d49; border-top: 1px solid #8e939c; font-size: 20px; color: #bfc1c5; }
.lights { display: flex; gap: 14px; width: 188px; padding: 18px 0 0 23px; }
.lights i { width: 22px; height: 22px; border-radius: 50%; }
.red { background: #ff5f57; }
.amber { background: #febc2e; }
.green { background: #28c840; }
.btab { display: flex; align-items: center; width: 402px; padding: 2px 21px 0 17px; border-right: 1px solid #60646e; }
.btab button { margin-left: auto; color: #bfc1c5; }
.btab button svg { width: 18px; height: 18px; }
.btab .fav { width: 28px; height: 28px; margin-right: 11px; }
.btab.active { padding-top: 0; background: #f9f9fa; color: #0c0c0d; border-top: 3px solid #0a84ff; border-right: 0; }
.btab.active button { color: #4a4a4d; }
.newtab { width: 60px; padding-left: 17px; }
.newtab svg { width: 26px; height: 26px; }
.navbar { display: flex; align-items: center; height: 71px; background: #f9f9fa; padding-left: 6px; }
.back { display: grid; place-items: center; width: 60px; height: 60px; border: 2px solid #b1b1b3; border-radius: 50%; background: #fff; }
.back svg { width: 30px; height: 26px; }
.tool { width: 30px; margin-left: 14px; }
.tool + .tool { margin-left: 28px; }
.tool svg { width: 30px; height: 28px; }
.urlbar {
  display: flex;
  align-items: center;
  flex: 1;
  height: 53px;
  margin-left: 220px;
  border: 2px solid #c0c0c2;
  border-radius: 6px;
  background: #fff;
  font-size: 24px;
  color: #757578;
  box-shadow: 0 2px 6px #0000000d;
}
.urlbar .u1 { width: 26px; height: 26px; margin-left: 12px; }
.urlbar i { width: 2px; height: 36px; margin: 0 14px 0 12px; background: #d7d7db; }
.urlbar .u2 { width: 24px; height: 26px; }
.urlbar .u3 { width: 30px; height: 16px; margin: 0 14px 0 8px; }
.url { flex: 1; }
.url b { font-weight: 400; color: #0c0c0d; }
.urlbar .u4 { width: 30px; height: 28px; margin-right: 20px; }
.urlbar .u5 { width: 30px; height: 30px; margin-right: 9px; }
.navend { display: flex; align-items: center; gap: 27px; margin-left: 224px; padding-right: 18px; }
.navend svg { width: 30px; height: 28px; }
.navend i { width: 2px; height: 60px; background: #dcdcdf; margin: 0 -6px; }
.bookmarks {
  display: grid;
  grid-template-columns: 201fr 254fr 261fr 263fr 236fr 179fr 104fr 263fr 88fr 65fr 262fr 263fr 251fr 235fr 54fr;
  align-items: center;
  height: 53px;
  padding: 3px 0 0 21px;
  background: #f9f9fa;
  border-bottom: 2px solid #dddde0;
  font-size: 20px;
}
.bookmarks a { display: flex; align-items: center; gap: 8px; color: #0c0c0d; text-decoration: none; white-space: nowrap; }
.bookmarks svg { width: 28px; height: 28px; }

/* Page banner */
.banner {
  display: flex;
  align-items: center;
  height: 67px;
  border: 2px solid #a6abb5;
  border-top: 0;
  background: linear-gradient(#e6e6e6, #efefef 18px);
  overflow: hidden;
}
.logo { display: flex; gap: 7px; width: 282px; height: 65px; padding-left: 17px; align-items: flex-start; }
.logo svg { width: 52px; height: 37px; }
.brand { display: flex; flex-direction: column; margin-top: -19px; }
.brand strong { font: 700 66px/40px Lato, sans-serif; }
.brand small { margin-top: 16px; padding-left: 30px; font: 700 14px/22px Lato, sans-serif; white-space: nowrap; }
.brand em { font: 400 18px/22px Lato, sans-serif; color: #5a2a82; }
.banner h1 { font-size: 23px; font-weight: 400; line-height: 28px; margin-bottom: 22px; }
.user { font-size: 23px; line-height: 28px; margin: 0 280px 22px auto; }
.office { position: relative; display: flex; height: 47px; padding: 0 9px 9px 11px; border: solid #b5b5b9; border-width: 0 2px; align-self: flex-start; }
.office select { appearance: none; width: 261px; height: 38px; padding: 0 5px 6px 3px; border: 2px solid #a6abb5; border-radius: 0; background: #fff; }
.drop { position: absolute; right: 11px; top: 2px; display: grid; place-items: center; width: 30px; height: 34px; border-left: 2px solid #b5b9c0; background: linear-gradient(#f5f5f5, #d8d8da); pointer-events: none; }
.drop svg { width: 14px; height: 10px; }
.logout { margin: 0 12px 24px 18px; color: #000; text-decoration: none; }

/* Shared section bar */
.bar {
  display: flex;
  align-items: center;
  gap: 14px;
  width: 100%;
  height: 46px;
  padding-left: 9px;
  border: 2px solid #a6abb5;
  border-width: 2px 0;
  border-top-color: #b0b2b6;
  background: linear-gradient(#f6f6f6, #e5e4e5 50%, #efeeef);
  font-size: 22px;
}
.content .bar { gap: 15px; }
.bar svg { width: 18px; height: 14px; }
.bar.up svg { transform: rotate(180deg); }

.work { display: flex; padding: 9px 5px 0 0; background: linear-gradient(#fff 1420px, #ededed 1460px); }
aside { width: 448px; margin-bottom: 30px; border: solid #a6abb5; border-width: 0 3px 0 2px; background: #fff; }
.find { padding: 4px 3px; }
.find input { display: block; width: 100%; height: 39px; padding: 0 3px; border: 2px solid #a6abb5; }
input::placeholder { color: #15406e; opacity: 1; }
.tree { list-style: none; border: solid #a6abb5; border-width: 2px 0 2px 2px; }
.mine { height: 617px; padding-top: 1px; }
.all { height: 618px; padding-top: 2px; margin-bottom: 2px; }
.tree li { position: relative; display: flex; align-items: center; gap: 6px; height: 39px; padding-left: 44px; }
.tree .ic { width: 26px; height: 26px; }
.tree .tg { width: 18px; height: 18px; margin-right: 6px; }
.tree .open { padding-left: 14px; }
.tree .l1 { padding-left: 80px; }
.tree .open.l1 { padding-left: 50px; }
.tree .l2 { padding-left: 116px; }
.tree .sel { background: linear-gradient(#e3f0fd, #acd3f8); }

/* Pen marks over the page */
.pen { position: absolute; z-index: 2; pointer-events: none; }
.pen-tree { left: 64px; top: -14px; width: 250px; height: 70px; }
.pen-tort { left: -8px; top: -24px; width: 142px; height: 68px; }
.pen-filter { left: 57px; top: -16px; width: 186px; height: 60px; }

.vsplit { width: 9px; margin: 0 5px 30px 0; padding-top: 698px; background: #e9e9ea; border-right: 1px solid #ccc; }
.vsplit i { display: block; width: 3px; height: 3px; margin: 0 0 5px 4px; background: #8d8d90; }
.main { flex: 1; min-width: 0; padding-top: 5px; }

/* Scan grid */
.gridpanel { min-height: 772px; border: 2px solid #a6abb5; background: #fff; }
.toolbar { display: flex; align-items: center; height: 73px; padding-left: 17px; background: linear-gradient(#fff, #e4e4e4 4px, #efefef 40px); }
.toolbar i { width: 2px; height: 43px; margin: 0 6px; background: #bdbdc0; }
.toolbar button { height: 39px; padding: 0 10px; border: 2px solid transparent; border-radius: 4px; white-space: nowrap; }
.toolbar button:disabled { color: #a5a5a5; border-color: #dcdcdc; background: #f3f3f3; }
.marked { position: relative; }
.tablewrap { position: relative; border-top: 6px solid #a6abb5; }
table { width: 100%; table-layout: fixed; border-collapse: separate; border-spacing: 0; }
th, td { padding: 0; overflow: hidden; white-space: nowrap; text-align: left; font-weight: 400; }
.filters td { height: 37px; border: solid #a6abb5; border-width: 0 3px 3px 0; background: #fff; }
.filters input:not([type]) { display: block; width: 100%; height: 34px; padding: 0 4px; border: 0; background: #fff; }
.filters .focus { padding: 3px; }
.filters .focus input:not([type]) { height: 28px; padding: 0 1px; background: #acd6ff; }
.filters .off { background: #f1f1f1; border-color: #f1f1f1; text-align: center; }
.filters .date { border-color: #d9dde3; }
.filters .funnel { border: 0; }
.funnel svg { width: 26px; height: 26px; margin: 0 auto; }
input[type=checkbox] { appearance: none; display: block; width: 24px; height: 24px; margin: 0 auto; border: 2px solid #8f9092; background: #efefef; box-shadow: inset 0 0 0 3px #fff; }
input[type=checkbox]:disabled { border-color: #cbcbcb; background: #d2d2d2; box-shadow: inset 0 0 0 5px #f8f8f8; }
.heads th { height: 41px; padding: 2px 0 0 7px; border: solid #c3c7cd; border-width: 0 2px 3px 0; background: linear-gradient(#fdfdfd, #e3e3e3); }
.heads .sorted { background: linear-gradient(#e6f3fe, #9accfa); }
.heads svg { display: inline-block; width: 14px; height: 9px; vertical-align: 9px; }
.heads .sortcell { padding: 0; text-align: center; border-right: 0; }
.scans tbody td { height: 43px; padding: 0 0 0 4px; border: 2px dotted #9db9ea; border-width: 2px 0; border-right: 3px solid #d6e3f6; background: #d6e3f6; }
.scans tbody td:first-child { padding-left: 7px; }
.scans tbody .blank { border: 0; background: #fff; }
.scans tbody .mid { padding: 0; }
.mid svg { width: 28px; height: 28px; margin: 0 auto; }
.qa { font: 700 12px "Liberation Sans", sans-serif; fill: #eee; }
.hsplit { display: flex; gap: 3px; justify-content: center; height: 9px; padding-top: 2px; background: #e6e6e6; border-bottom: 1px solid #bbb; }
.hsplit i { width: 4px; height: 4px; background: #9b9b9d; }

/* Detail tabs */
.tabs { display: flex; gap: 4px; height: 41px; padding-left: 10px; background: #fff; }
.tabs button { width: 141px; padding-bottom: 2px; border: 2px solid #b4b6ba; border-bottom: 0; border-radius: 6px 6px 0 0; background: linear-gradient(#d6d6d6, #ececec); }
.tabs .on { position: relative; z-index: 1; height: 43px; padding-bottom: 4px; font-weight: 700; background: linear-gradient(#f0f0f0, #fff); }
.frame { display: flex; height: 592px; border: 2px solid #b8bdc6; background: #fff; border-right: 0; }
.inner { display: grid; grid-template: 571px 1fr / 1fr 28px; flex: 1; min-width: 0; padding: 8px 10px 0; }
.pane { min-width: 0; }
.content { height: 543px; border: solid #a6abb5; border-width: 0 2px; overflow: hidden; }
h2 { padding: 18px 17px 8px; font-size: 20px; font-weight: 400; line-height: 24px; }
h2.tight { padding-top: 10px; }
.people { width: calc(100% - 18px); margin: 4px 0 16px 18px; border: solid #a6abb5; border-width: 2px 0 2px 2px; }
.people th { height: 42px; padding-left: 6px; border: solid #c3c7cd; border-width: 0 2px 1px 0; background: linear-gradient(#fff, #e3e3e3); }
.people .lead { padding-left: 22px; }
.people td { height: 43px; padding-left: 3px; border-bottom: 2px solid #ebebeb; }
.people .mid { padding: 0; }
.people .blank { border: 0; }
.facts { width: calc(100% - 38px); margin-left: 18px; border: 2px solid #a6abb5; }
.facts th { width: 241px; height: 34px; padding-right: 6px; border-right: 2px solid #a6abb5; background: #f5f6f8; color: #444; font-weight: 700; text-align: right; }
.facts td { padding-left: 4px; }
.facts tr + tr > * { border-top: 1px solid #a6abb5; }

/* Scroll bars */
.hscroll { display: flex; height: 28px; border-top: 2px solid #a6abb5; background: #efefef; }
.hscroll button, .vscroll button { display: grid; place-items: center; width: 28px; height: 28px; border: 2px solid #a9a9ab; border-radius: 3px; background: linear-gradient(90deg, #f6f6f6, #d9d9da); }
.hscroll button { height: 26px; }
.hscroll svg { width: 10px; height: 12px; }
.vscroll svg { width: 12px; height: 10px; }
.hscroll .thumb { display: flex; align-items: center; justify-content: center; gap: 3px; flex: 1; margin-right: 26px; border: solid #a0a1a4; border-width: 0 1px 2px; background: linear-gradient(#f0f0f1, #b5b5b9); }
.hscroll .thumb i { width: 3px; height: 14px; background: #77787b; }
.vscroll { display: flex; flex-direction: column; background: #ededee; padding: 2px 0 30px; }
.vscroll .thumb { display: grid; align-content: center; justify-content: center; gap: 4px; height: 56px; border: 2px solid #a9a9ab; border-radius: 3px; background: linear-gradient(90deg, #f4f4f4, #cfcfd1); }
.vscroll .thumb i { width: 12px; height: 3px; background: #77787b; }
.vscroll button:last-child { margin-top: auto; }
.outer { width: 30px; padding: 0 0 2px; border-left: 2px solid #b8bdc6; }
.outer .thumb { height: 68px; }
.under { margin: 0 18px 0 20px; border: solid #a6abb5; border-width: 0 2px; }
.under span { display: block; width: 490px; height: 2px; margin-left: 245px; background: #000; }
.cedar { display: flex; height: 32px; margin: 0 87px 0 32px; border: solid #a6abb5; border-width: 0 2px; line-height: 34px; }
.cedar dt { width: 241px; padding-right: 6px; border-right: 2px solid #a6abb5; background: #e9eaed; color: #444; font-weight: 700; text-align: right; }
.cedar dd { padding-left: 4px; }

/* Dock */
.desk { display: flex; height: 123px; padding-left: 84px; overflow: hidden; }
.dock { display: flex; width: 2832px; padding: 8px 5px 0 7px; border-radius: 10px 10px 0 0; background: linear-gradient(#6592ce, #6a9ee3); }
.app { position: relative; width: 101px; }
.app > svg { width: 101px; height: 100px; }
.app.run::after { content: ""; display: block; width: 7px; height: 7px; margin: 4px auto 0; border-radius: 50%; background: #03206b; }
.badge { position: absolute; left: 64px; top: 2px; width: 35px; height: 35px; border-radius: 50%; background: #fb4a43; color: #fff; font: 20px/35px Inter, sans-serif; text-align: center; }
.gap { width: 46px; height: 90px; padding-left: 22px; }
.gap::before { content: ""; display: block; width: 2px; height: 90px; background: #3c6cb0; }
.gap.short::before { height: 60px; margin-top: 16px; }
.oct { font: 17px Inter, sans-serif; fill: #fff; }
.day { font: 38px Inter, sans-serif; fill: #222; }
.ess { font: 700 104px "Liberation Sans", sans-serif; fill: url(#silver); }
.term { font: 700 22px "Liberation Mono", monospace; fill: #fff; }
.ex { font: 700 32px Lato, sans-serif; fill: #fff; }
.file { color: #fff; font: 600 20px/28px Inter, sans-serif; text-shadow: 0 2px 3px #0008; white-space: nowrap; }
.file svg { width: 62px; height: 47px; margin-bottom: 24px; }
```
